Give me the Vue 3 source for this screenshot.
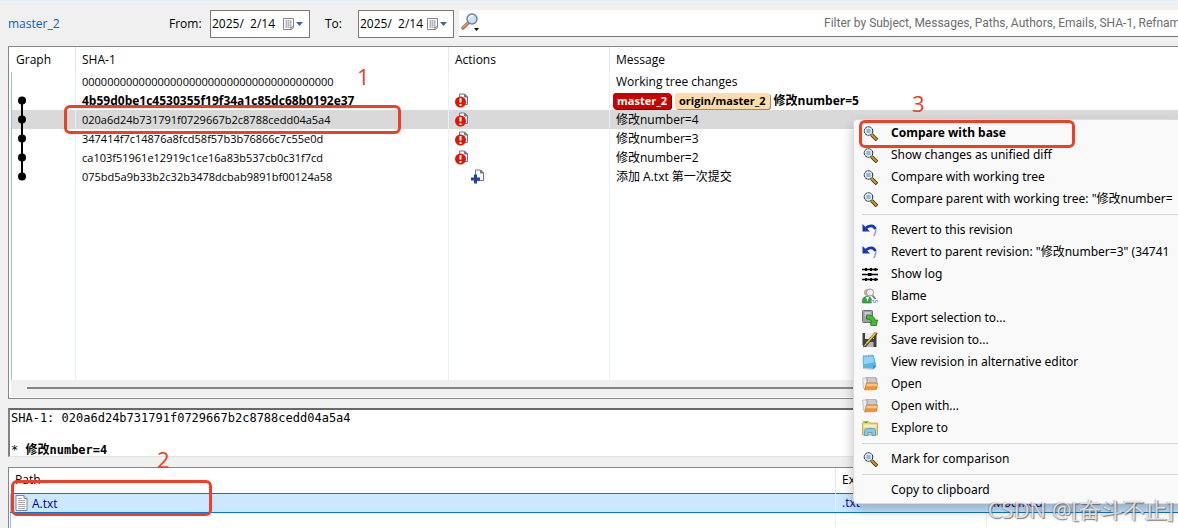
<script setup>
import {ref} from 'vue';

const fromDate = ref('2025/  2/14');
const toDate = ref('2025/  2/14');
const filter = ref('');
const selected = ref(2);

const commits = [
  {sha: '0000000000000000000000000000000000000000', action: '', message: 'Working tree changes', refs: []},
  {
    sha: '4b59d0be1c4530355f19f34a1c85dc68b0192e37', action: 'modified', message: '修改number=5', head: true,
    refs: [{name: 'master_2', type: 'local'}, {name: 'origin/master_2', type: 'remote'}],
  },
  {sha: '020a6d24b731791f0729667b2c8788cedd04a5a4', action: 'modified', message: '修改number=4', refs: []},
  {sha: '347414f7c14876a8fcd58f57b3b76866c7c55e0d', action: 'modified', message: '修改number=3', refs: []},
  {sha: 'ca103f51961e12919c1ce16a83b537cb0c31f7cd', action: 'modified', message: '修改number=2', refs: []},
  {sha: '075bd5a9b33b2c32b3478dcbab9891bf00124a58', action: 'added', message: '添加 A.txt 第一次提交', refs: []},
];

const menuGroups = [
  [
    {icon: 'compare', label: 'Compare with base', bold: true},
    {icon: 'compare', label: 'Show changes as unified diff'},
    {icon: 'compare', label: 'Compare with working tree'},
    {icon: 'compare', label: 'Compare parent with working tree: "修改number='},
  ],
  [
    {icon: 'revert', label: 'Revert to this revision'},
    {icon: 'revert', label: 'Revert to parent revision: "修改number=3" (34741'},
    {icon: 'log', label: 'Show log'},
    {icon: 'blame', label: 'Blame'},
    {icon: 'export', label: 'Export selection to...'},
    {icon: 'save', label: 'Save revision to...'},
    {icon: 'editor', label: 'View revision in alternative editor'},
    {icon: 'open', label: 'Open'},
    {icon: 'open', label: 'Open with...'},
    {icon: 'explore', label: 'Explore to'},
  ],
  [
    {icon: 'compare', label: 'Mark for comparison'},
  ],
  [
    {icon: '', label: 'Copy to clipboard'},
  ],
];
</script>

<template>
  <main class="window">
    <form class="toolbar" @submit.prevent>
      <a class="branch" href="#">master_2</a>
      <label class="from_label" for="from">From:</label>
      <div class="date">
        <input id="from" v-model="fromDate" type="text">
        <button type="button" aria-label="Pick start date">
          <svg viewBox="0 0 22 14">
            <path d="M1.500 1.500h10v9l-2 2h-8z" fill="#fff" stroke="#8a8582"/>
            <path d="M3 4h7M3 6h7M3 8h7M3 10h5M4.500 3v8M6.500 3v8M8.500 3v8" stroke="#b3b8c6" fill="none"/>
            <path d="M9 12.500v-2.500h2.500" fill="#ddd" stroke="#8a8582"/>
            <path d="M14 5h7l-3.500 4z" fill="#45639c"/>
          </svg>
        </button>
      </div>
      <label class="to_label" for="to">To:</label>
      <div class="date">
        <input id="to" v-model="toDate" type="text">
        <button type="button" aria-label="Pick end date">
          <svg viewBox="0 0 22 14">
            <path d="M1.500 1.500h10v9l-2 2h-8z" fill="#fff" stroke="#8a8582"/>
            <path d="M3 4h7M3 6h7M3 8h7M3 10h5M4.500 3v8M6.500 3v8M8.500 3v8" stroke="#b3b8c6" fill="none"/>
            <path d="M9 12.500v-2.500h2.500" fill="#ddd" stroke="#8a8582"/>
            <path d="M14 5h7l-3.500 4z" fill="#45639c"/>
          </svg>
        </button>
      </div>
      <div class="search">
        <button type="button" aria-label="Filter options">
          <svg viewBox="0 0 20 20">
            <path d="M2 15L7.500 9.500" stroke="#b4714a" stroke-width="3.400" stroke-linecap="round"/>
            <path d="M2 14.500L7 9.500" stroke="#e0a173" stroke-width="1.200" stroke-linecap="round"/>
            <circle cx="11" cy="6" r="5" fill="#c5e4f8" stroke="#6b7f93" stroke-width="1.400"/>
            <path d="M8 6a3 3 0 0 1 4-3" fill="none" stroke="#fff" stroke-width="1.600"/>
            <path d="M13 15h5l-2.500 3z" fill="#000"/>
          </svg>
        </button>
        <input v-model="filter" type="text" aria-label="Filter"
               placeholder="Filter by Subject, Messages, Paths, Authors, Emails, SHA-1, Refname">
      </div>
    </form>

    <section class="panel log">
      <table>
        <colgroup>
          <col class="col_graph">
          <col class="col_sha">
          <col class="col_actions">
          <col>
        </colgroup>
        <thead>
          <tr>
            <th>Graph</th>
            <th>SHA-1</th>
            <th>Actions</th>
            <th>Message</th>
          </tr>
        </thead>
        <tbody>
          <tr v-for="(commit, i) in commits" :key="commit.sha"
              :class="{selected: i === selected, head: commit.head}" @click="selected = i">
            <td class="graph">
              <svg v-if="i > 0" viewBox="0 0 20 19">
                <path v-if="i > 1" d="M10 0V10" stroke="#000" stroke-width="2"/>
                <path v-if="i < commits.length - 1" d="M10 9V19" stroke="#000" stroke-width="2"/>
                <circle cx="10" cy="9.500" r="4" fill="#000"/>
              </svg>
            </td>
            <td class="sha">{{ commit.sha }}</td>
            <td class="actions">
              <svg v-if="commit.action === 'modified'" viewBox="0 0 32 16">
                <path d="M4.500 1h5l3 3v7.500h-8z" fill="#f6f7f9" stroke="#6d7b8e"/>
                <path d="M9.500 1v3h3z" fill="#6d7b8e" stroke="#6d7b8e"/>
                <circle cx="5.500" cy="9" r="5.500" fill="#e31400"/>
                <path d="M4.500 5h2v4.500h-2zM4.500 11h2v2h-2z" fill="#fff"/>
              </svg>
              <svg v-if="commit.action === 'added'" viewBox="0 0 32 16">
                <path d="M20.500 1h5l3 3v7.500h-8z" fill="#f6f7f9" stroke="#6d7b8e"/>
                <path d="M25.500 1v3h3z" fill="#6d7b8e" stroke="#6d7b8e"/>
                <path d="M19 5.500h3v3h3v3h-3v3h-3v-3h-3v-3h3z" fill="#2340a8"/>
              </svg>
            </td>
            <td class="message">
              <span v-for="item in commit.refs" :key="item.name" :class="['ref', item.type]">{{ item.name }}</span>
              <span>{{ commit.message }}</span>
            </td>
          </tr>
          <tr class="filler">
            <td></td>
            <td></td>
            <td></td>
            <td></td>
          </tr>
        </tbody>
      </table>
      <div class="scrollbar">
        <div class="thumb"></div>
      </div>
    </section>

    <section class="detail">
      <p>SHA-1: {{ commits[selected].sha }}</p>
      <p class="subject">* <b>{{ commits[selected].message }}</b></p>
    </section>

    <section class="panel files">
      <table>
        <colgroup>
          <col class="col_path">
          <col class="col_ext">
          <col class="col_status">
          <col>
        </colgroup>
        <thead>
          <tr>
            <th>Path</th>
            <th>Extension</th>
            <th></th>
            <th></th>
          </tr>
        </thead>
        <tbody>
          <tr class="file">
            <td class="path">
              <svg viewBox="0 0 13 16">
                <path d="M1 .5h8l3 3v12h-11z" fill="#fff" stroke="#858585"/>
                <path d="M9 .5v3h3" fill="#ddd" stroke="#858585"/>
                <path d="M3 3.500h4M3 5.500h7M3 7.500h7M3 9.500h7M3 11.500h7M3 13.500h7" stroke="#aaa"/>
              </svg>
              <span>A.txt</span>
            </td>
            <td>.txt</td>
            <td>Modified</td>
            <td></td>
          </tr>
          <tr class="filler">
            <td></td>
            <td></td>
            <td></td>
            <td></td>
          </tr>
        </tbody>
      </table>
    </section>

    <div class="menu" role="menu">
      <div v-for="(group, g) in menuGroups" :key="g" class="group" role="group">
        <button v-for="item in group" :key="item.label" type="button" role="menuitem" :class="{bold: item.bold}">
          <svg class="icon" viewBox="0 0 16 16">
            <g v-if="item.icon === 'compare'">
              <path d="M9.500 9.500L15 15" stroke="#3d2b05" stroke-width="3.600"/>
              <path d="M9.500 9.500L14.500 14.500" stroke="#d99a1c" stroke-width="1.800"/>
              <circle cx="6.500" cy="6" r="4.300" fill="#d3edfa" stroke="#1d262e" stroke-dasharray="2.200 .5"/>
              <path d="M4.500 5h4M4.500 7h4" stroke="#5f7f95" stroke-width="1"/>
            </g>
            <g v-if="item.icon === 'revert'">
              <path d="M4 6C8 2.500 13.500 4 13.800 8.500c.1 2-.8 3.500-2 5.500" fill="none" stroke="#8fa5e3" stroke-width="1.600"/>
              <path d="M4 6C7 3 12 3 13.300 7" fill="none" stroke="#1438b0" stroke-width="2.800"/>
              <path d="M.5 2v7.500h7.500z" fill="#1438b0"/>
            </g>
            <g v-if="item.icon === 'log'" stroke="#000" fill="#000">
              <path d="M0 3.500h16M0 8.500h16M0 13.500h16" stroke-width="1.400"/>
              <path d="M3 3.500h2M8 3.500h2M12.500 3.500h2M6 8.500h3.500M3 13.500h2M8 13.500h2M12.500 13.500h2" stroke-width="3"/>
            </g>
            <g v-if="item.icon === 'blame'">
              <circle cx="5.500" cy="4.500" r="3.500" fill="#c9aa92"/>
              <path d="M.5 15v-2.500c0-3 2-4 4.500-4s4.500 1 4.500 4v2.500z" fill="#35a447" stroke="#207a34" stroke-width=".6"/>
              <path d="M4 9h3l-1.500 4.500z" fill="#fff"/>
              <circle cx="8" cy="4.500" r="3.600" fill="#f1f5f8" fill-opacity=".9" stroke="#9a9a9a"/>
              <path d="M10.500 7.500l3 3.500" stroke="#777" stroke-width="1.800"/>
              <path d="M9.500 14.500v-2h2v2h2v-2h2v2" fill="none" stroke="#a3b1d0" stroke-width="1.200"/>
            </g>
            <g v-if="item.icon === 'export'">
              <rect x=".5" y=".5" width="10" height="12" rx="1" fill="#9ba1a6" stroke="#6b7075"/>
              <path d="M2.500 3h6M2.500 5.500h6" stroke="#d5d9dc" stroke-width="1.300"/>
              <path d="M4.500 5.500c5-1 8 1 8.500 4.500h2.500l-1 5.500H9l-1-3 2-.5c-.8-2-2.500-3-5.500-3z" fill="#46bb2e" stroke="#1c7a16" stroke-width=".8"/>
            </g>
            <g v-if="item.icon === 'save'">
              <path d="M.5 1h14v14h-12l-2-2z" fill="#3d4148"/>
              <path d="M3 1h9v6h-9z" fill="#e7e9ec"/>
              <path d="M4.500 10h7v5h-7z" fill="#b4b8bd"/>
              <path d="M14.500 .5L3.500 13" stroke="#5e3a10" stroke-width="3"/>
              <path d="M14 .5L4 12" stroke="#f0c437" stroke-width="1.700"/>
              <path d="M3.500 11l-2.500 4 4-2z" fill="#e8c896" stroke="#2a2a2a" stroke-width=".5"/>
            </g>
            <g v-if="item.icon === 'editor'">
              <path d="M1 2.500l10.500-1 2.500 11-2.500 2.500-10-.5z" fill="#59b5e7" stroke="#4a93bc" stroke-width=".6"/>
              <path d="M1.500 3l9.500-.8 1.200 6-10.200 2z" fill="#8fd4f6"/>
              <path d="M1 2l10-.7" stroke="#9aa8b0" stroke-width="1.600" stroke-dasharray="1 .7"/>
              <path d="M1.500 14.500l9 .5" stroke="#c9d6dd"/>
              <path d="M11 14.500l3-2.500-2.500-.3z" fill="#2f86bd"/>
            </g>
            <g v-if="item.icon === 'open'">
              <path d="M4 1.500h10l1 1v10H4z" fill="#b4b6b8" stroke="#9b9da0" stroke-width=".6"/>
              <path d="M.8 2h3l1 1.500v2L3 13.500 1.300 12z" fill="#ededed" stroke="#a6a6a6" stroke-width=".6"/>
              <path d="M6 3h7M6 5h8" stroke="#e0e0e0"/>
              <path d="M4.500 7h11l-1 6.500-12 .5z" fill="#f5902f" stroke="#dc7a22" stroke-width=".6"/>
              <path d="M5 7.800h10l-.5 2.400H4z" fill="#ffc482"/>
            </g>
            <g v-if="item.icon === 'explore'">
              <path d="M.5 3.500l1-2h5l1 1.500h8v12H.5z" fill="#ecd272" stroke="#b99a38" stroke-width=".7"/>
              <path d="M1.500 4.500h13v3h-13z" fill="#fbf0b3"/>
              <path d="M2.500 2.500h3" stroke="#4aa641"/>
              <path d="M2.500 15.500v-4c0-2 1-3 3-3h5c2 0 3 1 3 3v4h-3.500v-3h-4v3z" fill="#7fcbf2" stroke="#3f92c4" stroke-width=".7"/>
            </g>
          </svg>
          <span>{{ item.label }}</span>
        </button>
      </div>
    </div>

    <div class="mark mark_commit"></div>
    <div class="mark mark_file"></div>
    <div class="mark mark_compare"></div>
    <span class="step step_1">1</span>
    <span class="step step_2">2</span>
    <span class="step step_3">3</span>
    <span class="watermark">CSDN @[奋斗不止]</span>
  </main>
</template>

<style>
body {
  margin: 0;
  overflow: hidden;
  background-color: #f0f0f0;
}
</style>

<style scoped>
.window {
  position: relative;
  height: 100vh;
  box-sizing: border-box;
  overflow: hidden;
  display: flex;
  flex-direction: column;
  border-top: 1px solid #e3f0f8;
  background-color: #f0f0f0;
  color: #000;
  font-family: "Open Sans", "Noto Sans CJK SC", sans-serif;
  font-size: 12px;
  line-height: 18px;
}

input, button {
  margin: 0;
  padding: 0;
  border: none;
  background: none;
  color: inherit;
  font: inherit;
  outline: none;
}

.toolbar {
  display: flex;
  flex-shrink: 0;
  align-items: center;
  height: 45px;
  padding-left: 8px;
}

.branch {
  width: 161px;
  color: #0066cc;
  text-decoration: none;
}

.from_label {
  width: 41px;
}

.to_label {
  width: 33px;
  margin-left: 15px;
}

.date {
  display: flex;
  align-items: center;
  box-sizing: border-box;
  width: 100px;
  height: 28px;
  padding: 0 5px 0 1px;
  border: 1px solid #7a7a7a;
  background-color: #fff;
}

.to_label + .date {
  width: 96px;
}

.date input {
  flex: 1;
  min-width: 0;
}

.date button {
  width: 22px;
  height: 14px;
}

.date svg {
  display: block;
  width: 22px;
  height: 14px;
}

.search {
  flex: 1;
  display: flex;
  align-items: center;
  box-sizing: border-box;
  height: 27px;
  margin-left: 5px;
  border-bottom: 1px solid #7a7a7a;
  background-color: #fff;
}

.search button {
  width: 20px;
  height: 20px;
  margin-left: 2px;
}

.search svg {
  display: block;
  width: 20px;
  height: 20px;
}

.search input {
  flex: 1;
  min-width: 0;
  padding-left: 343px;
  font-family: Roboto, "Open Sans", sans-serif;
}

.search input::placeholder {
  color: #6d6d6d;
  opacity: 1;
}

.panel {
  flex-shrink: 0;
  margin-left: 8px;
  padding-left: 2px;
  border: 1px solid #828790;
  border-right: none;
  background-color: #fff;
}

table {
  width: 100%;
  table-layout: fixed;
  border-collapse: collapse;
}

th, td {
  box-sizing: border-box;
  padding: 0 0 0 6px;
  border-left: 1px solid #e5f0fb;
  text-align: left;
  white-space: nowrap;
  overflow: hidden;
}

th {
  height: 25px;
  border-left-color: #e5e5e5;
  font-weight: normal;
}

th:first-child {
  padding-left: 4px;
  border-left-color: #fff;
}

td {
  height: 19px;
}

td:first-child {
  border-left-color: #8fc1f2;
}

.col_graph {
  width: 64px;
}

.col_sha {
  width: 373px;
}

.col_actions {
  width: 161px;
}

.selected {
  background-color: #d9d9d9;
}

.head {
  font-weight: bold;
}

.log svg {
  display: block;
}

.graph {
  padding-left: 0;
}

.graph svg {
  width: 20px;
  height: 19px;
}

.sha {
  font-size: 11px;
}

.head .sha {
  font-size: 12px;
}

.actions svg {
  width: 32px;
  height: 16px;
}

.head .message {
  padding-left: 3px;
}

.ref {
  display: inline-block;
  height: 16px;
  margin-right: 4px;
  padding: 0 4px;
  border-radius: 3px;
  font-size: 11px;
  line-height: 16px;
}

.ref.local {
  background-color: #c80000;
  box-shadow: 1px 1px #7c0000;
  color: #fff;
}

.ref.remote {
  background-color: #ffdca8;
  box-shadow: 1px 1px #a08a68;
}

.log .filler td {
  height: 194px;
}

.scrollbar {
  padding: 7px 0 8px 16px;
  border-bottom: 1px solid #fff;
  background-color: #f0f0f0;
}

.thumb {
  height: 2px;
  background-color: #868686;
}

.detail {
  flex-shrink: 0;
  box-sizing: border-box;
  height: 49px;
  margin: 9px 0 11px 8px;
  padding-left: 1px;
  border-top: 2px solid #696969;
  border-left: 2px solid #828282;
  border-bottom: 1px solid #e3e3e3;
  background-color: #fff;
  font-family: "DejaVu Sans Mono", "Noto Sans CJK SC", monospace;
  line-height: 16px;
  overflow: hidden;
}

.detail p {
  margin: 0;
}

.detail .subject {
  margin-top: 16px;
}

.col_path {
  width: 825px;
}

.col_ext {
  width: 151px;
}

.col_status {
  width: 160px;
}

.files {
  margin-top: -1px;
  padding-left: 1px;
}

.file td {
  border-top: 1px solid #0078d7;
  border-bottom: 1px solid #0078d7;
  background-color: #cce8ff;
  color: #0000a0;
}

.path {
  padding-left: 4px;
}

.path svg {
  width: 13px;
  height: 16px;
  margin-right: 4px;
  vertical-align: middle;
}

.path span {
  vertical-align: middle;
}

.menu {
  position: absolute;
  top: 118px;
  left: 853px;
  right: -8px;
  padding: 2px 0;
  border: 1px solid #dcdcdc;
  border-radius: 4px;
  background-color: #f9f9f9;
  box-shadow: 0 6px 12px rgba(0, 0, 0, 0.25);
  font-family: "Noto Sans", "Noto Sans CJK SC", sans-serif;
}

.group + .group::before {
  content: "";
  display: block;
  height: 1px;
  margin: 4px 0 4px 8px;
  background-color: #d7d7d7;
}

.menu button {
  display: flex;
  align-items: center;
  gap: 13px;
  width: 100%;
  height: 22px;
  padding-left: 8px;
  white-space: nowrap;
}

.menu .bold {
  font-weight: bold;
}

.icon {
  flex-shrink: 0;
  width: 16px;
  height: 16px;
}

.mark {
  position: absolute;
  box-sizing: border-box;
  border: 3px solid #ed4027;
  border-radius: 6px;
  pointer-events: none;
}

.mark_commit {
  top: 104px;
  left: 64px;
  width: 337px;
  height: 29px;
}

.mark_file {
  top: 479px;
  left: 11px;
  width: 201px;
  height: 36px;
}

.mark_compare {
  top: 119px;
  left: 859px;
  width: 216px;
  height: 28px;
}

.step {
  position: absolute;
  color: #ed4027;
  font-size: 22px;
  line-height: 24px;
}

.step_1 {
  top: 63px;
  left: 357px;
}

.step_2 {
  top: 446px;
  left: 157px;
}

.step_3 {
  top: 90px;
  left: 912px;
}

.watermark {
  position: absolute;
  right: 4px;
  bottom: 4px;
  color: rgba(255, 255, 255, 0.7);
  font-size: 22px;
  line-height: 30px;
  text-shadow: 1px 1px 1px rgba(90, 90, 90, 0.8), -1px 0 1px rgba(120, 120, 120, 0.5);
}
</style>
